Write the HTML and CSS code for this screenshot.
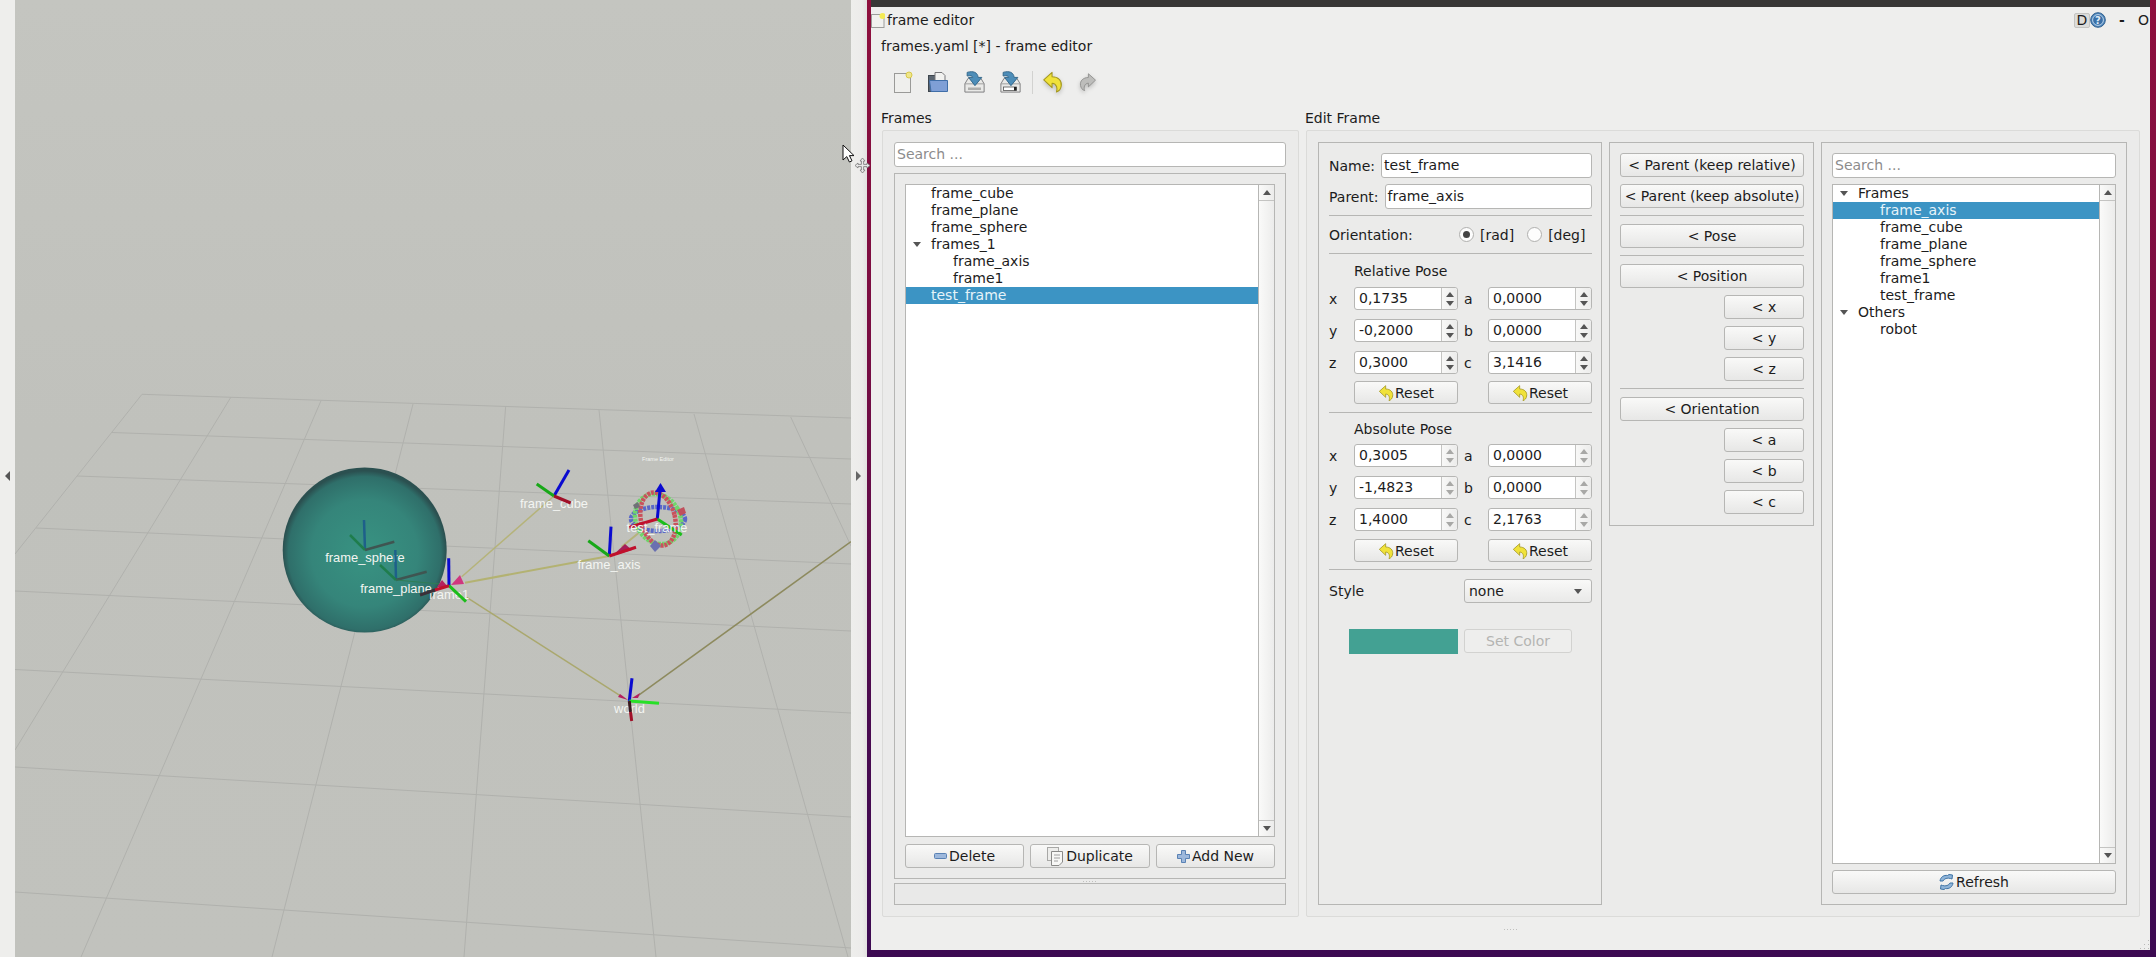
FILE: index.html
```html
<!DOCTYPE html>
<html lang="en">
<head>
<meta charset="utf-8">
<title>frame editor</title>
<link rel="stylesheet" href="styles.css">
</head>
<body>
<svg class="sprite" width="0" height="0" aria-hidden="true">
  <defs>
    <symbol id="i-undo" viewBox="0 0 24 24">
      <path d="M2 9.5 L11.5 1 V6 C18.5 6 23 10.5 22 16.5 C21.5 20 19.5 22.5 16.5 23.5 C18 19.5 17 14 11.5 13.5 V18.5 Z" fill="#f0e23a" stroke="#a3971f" stroke-width="1.2" stroke-linejoin="round"/>
    </symbol>
    <symbol id="i-redo" viewBox="0 0 24 24">
      <path d="M22 9.5 L12.5 1 V6 C5.5 6 1 10.5 2 16.5 C2.5 20 4.5 22.5 7.5 23.5 C6 19.5 7 14 12.5 13.5 V18.5 Z" fill="#bdbdbb" stroke="#8f8f8d" stroke-width="1.2" stroke-linejoin="round"/>
    </symbol>
    <symbol id="i-save" viewBox="0 0 24 24">
      <path d="M1.5 14 L5 8 H19 L22.5 14 V23 H1.5 Z" fill="#e9e9e7" stroke="#77777a" stroke-width="1"/>
      <path d="M1.5 14 H22.5" stroke="#9a9a9a" stroke-width="1"/>
      <path d="M4 1.5 C10.5 -0.5 15.5 1.5 16 7 H20 L12.5 16 L5.5 7 H10 C10 5.5 7.5 4.5 4 5.5 Z" fill="#4d8db8" stroke="#2f6488" stroke-width="1" stroke-linejoin="round"/>
    </symbol>
  </defs>
</svg>
<div class="screen">
  <div class="handle handle-left"><span class="tri-left"></span></div>
  <div class="viewport">
    <svg class="scene" viewBox="15 0 836 957" width="836" height="957">
      <defs>
        <radialGradient id="ball" cx="50%" cy="52%" r="50%">
          <stop offset="0" stop-color="#389382"/>
          <stop offset="0.65" stop-color="#35857a"/>
          <stop offset="0.93" stop-color="#2f6f6a"/>
          <stop offset="1" stop-color="#2b5050"/>
        </radialGradient>
      </defs>
      <g class="grid">
        <path d="M142 394.3L851 418M112 432.5L851 459M77 476L851 504M36 528L851 564M15 591L851 631M15 669.5L851 713M15 767L851 817M15 892L851 948"/>
        <path d="M142 394.3L15 554M231 397L15 750M321 400.7L81 957M413 404L272 957M505.7 406L464 957M599 410L656 957M694 414L848 957M790.7 417L851 546"/>
      </g>
      <ellipse cx="364.7" cy="550" rx="82" ry="82.5" fill="url(#ball)"/>
      <g class="axis-dim">
        <path d="M365 550L364 520" stroke="#1e608a"/>
        <path d="M365 550L350 535" stroke="#1f7d4d"/>
        <path d="M365 550L394.3 541.7" stroke="#3f5551"/>
      </g>
      <text class="label" x="365" y="562" text-anchor="middle">frame_sphere</text>
      <g class="axis-dim">
        <path d="M396 580L395.3 550" stroke="#1e608a"/>
        <path d="M396 580L380 565" stroke="#1f7d4d"/>
        <path d="M396 580L426.7 571.7" stroke="#3f5551"/>
      </g>
      <g class="links">
        <path d="M396 580L440 584" stroke="#2f7d56" stroke-width="1"/>
        <path d="M554 496L461.7 576.7" stroke="#b5b37a" stroke-width="1.5"/>
        <path d="M609.3 556L465 582.7" stroke="#b3b272" stroke-width="2"/>
        <path d="M466.7 597.3L621.7 696.7" stroke="#aaa86e" stroke-width="1.5"/>
        <path d="M636.7 696.7L851 541.5" stroke="#8d8a5e" stroke-width="1.5"/>
        <path d="M621.7 546.7L638.3 533.3" stroke="#b5b37a" stroke-width="2"/>
      </g>
      <path d="M451 585L460 575L464 584Z" fill="#d0367f"/>
      <path d="M437 587L442 580L448 587Z" fill="#b5205f"/>
      <path d="M612 556L625 544L632 550Z" fill="#a51f58"/>
      <path d="M618 697L628 700L620 694Z" fill="#b5205f"/>
      <path d="M632 698L640 693L638 698Z" fill="#b5205f"/>
      <text class="label" x="396" y="593" text-anchor="middle">frame_plane</text>
      <text class="label" x="449" y="599" text-anchor="middle">frame1</text>
      <g class="axis">
        <path d="M449 585.7L448.7 558.3" stroke="#0a0ad0"/>
        <path d="M449 585.7L466 601.7" stroke="#1bbd1b"/>
        <path d="M449 585.7L435 590" stroke="#c0102c"/>
        <path d="M435 590L420 595" stroke="#3a3038"/>
      </g>
      <text class="label" x="554" y="508" text-anchor="middle">frame_cube</text>
      <g class="axis">
        <path d="M554 496L569 470" stroke="#0a0ad0"/>
        <path d="M554 496L536.7 484" stroke="#18a818"/>
        <path d="M554 496L570.7 503" stroke="#a01028"/>
      </g>
      <g class="axis">
        <path d="M609.3 556L611 526.7" stroke="#0a0ad0"/>
        <path d="M609.3 556L588.3 540.7" stroke="#18a818"/>
        <path d="M609.3 556L636 547.3" stroke="#c0102c"/>
      </g>
      <text class="label" x="609" y="568.5" text-anchor="middle">frame_axis</text>
      <g class="rings">
        <ellipse cx="658" cy="519" rx="27" ry="12" stroke="#5a68c8"/>
        <ellipse cx="658" cy="519" rx="22" ry="26" stroke="#6fd66a" transform="rotate(-30 658 519)"/>
        <ellipse cx="658" cy="519" rx="17" ry="27" stroke="#c9525c" transform="rotate(-14 658 519)"/>
      </g>
      <path d="M650 546L655 540L661 546L655 552Z" fill="#6a70b0"/>
      <path d="M677 510L684 507L686 513L680 516Z" fill="#c0505c"/>
      <path d="M633 505L638 502L640 507L635 509Z" fill="#707078"/>
      <g class="axis">
        <path d="M657.3 519L660 490" stroke="#0a0ad0"/>
        <path d="M657.3 519L681.7 535" stroke="#1bbd1b"/>
        <path d="M657.3 519L629.3 527.3" stroke="#c0102c"/>
      </g>
      <path d="M655 492L660.5 483L666 492Z" fill="#0a0ad0"/>
      <text class="label" x="657" y="532" text-anchor="middle">test_frame</text>
      <text class="label-tiny" x="658" y="461" text-anchor="middle">Frame Editor</text>
      <text class="label" x="629.5" y="713" text-anchor="middle">world</text>
      <g class="axis">
        <path d="M629.3 701L632 678.3" stroke="#0a0ad0"/>
        <path d="M629.3 701L659 703.3" stroke="#28e028"/>
        <path d="M629.3 701L630.5 712" stroke="#3a1a20"/>
        <path d="M630.5 712L631.7 721" stroke="#a01028"/>
      </g>
    </svg>
  </div>
  <div class="handle handle-right"><span class="tri-right"></span></div>
  <div class="desktop">
    <div class="window">
      <div class="wm-bar"></div>
      <div class="titlebar">
        <span class="doc-icon">
          <svg width="14" height="15" viewBox="0 0 14 15"><rect x="0.5" y="1.5" width="12.5" height="13" fill="#f1f1ef" stroke="#9c9c9a"/><circle cx="11.5" cy="3" r="3" fill="#f3ea55"/></svg>
        </span>
        <span class="title-text">frame editor</span>
        <span class="title-tools">
          <span class="dock-d">D</span>
          <svg class="help" width="16" height="16" viewBox="0 0 16 16"><circle cx="8" cy="8" r="7.3" fill="#4f86bb" stroke="#2f5f8f"/><circle cx="8" cy="8" r="5.4" fill="#3a70a8" stroke="#bcd4ea"/><text x="8" y="11.5" text-anchor="middle" class="help-q">?</text></svg>
          <span class="wm-btn wm-min">-</span>
          <span class="wm-btn wm-o">O</span>
        </span>
      </div>
      <div class="apptitle">frames.yaml [*] - frame editor</div>
      <div class="toolbar">
        <span class="tool">
          <svg width="22" height="22" viewBox="0 0 22 22"><rect x="3.5" y="2.5" width="16" height="19" fill="#efefed" stroke="#9a9a98"/><circle cx="18" cy="4" r="3" fill="#efe68a" stroke="#d8c94a"/></svg>
        </span>
        <span class="tool">
          <svg width="22" height="22" viewBox="0 0 22 22"><rect x="1.5" y="4.5" width="14" height="16" fill="#5c6670" stroke="#3e464e"/><path d="M8 1.5H15L18 4.5V11H8Z" fill="#f2f2f0" stroke="#77777a"/><path d="M2.5 9.5H20.5V20.5H4Z" fill="#7f9fd6" stroke="#3f6ea8"/></svg>
        </span>
        <span class="tool">
          <svg width="23" height="22" viewBox="0 0 23 22"><use href="#i-save" width="23" height="22"/><rect x="5" y="16.5" width="13" height="2.5" fill="#aeaeac"/></svg>
        </span>
        <span class="tool">
          <svg width="23" height="22" viewBox="0 0 23 22"><use href="#i-save" width="23" height="22"/><rect x="4.5" y="16" width="13" height="3.5" fill="#fff" stroke="#555" stroke-width="0.8"/><rect x="15" y="16" width="2.5" height="3.5" fill="#222"/></svg>
        </span>
        <span class="tool-sep"></span>
        <span class="tool tool-shadow"><svg width="21" height="22"><use href="#i-undo"/></svg></span>
        <span class="tool tool-shadow"><svg width="18" height="22"><use href="#i-redo"/></svg></span>
      </div>
      <div class="main">
        <section class="col col-frames">
          <div class="col-label">Frames</div>
          <div class="box box-frames">
            <div class="input placeholder">Search ...</div>
            <div class="frames-inner">
              <div class="list list-frames">
                <div class="rows">
                  <div class="row top">frame_cube</div>
                  <div class="row top">frame_plane</div>
                  <div class="row top">frame_sphere</div>
                  <div class="row parent"><span class="twist"></span>frames_1</div>
                  <div class="row child">frame_axis</div>
                  <div class="row child">frame1</div>
                  <div class="row top selected">test_frame</div>
                </div>
                <div class="scrollbar">
                  <span class="sb-btn sb-up"><span class="tri-up"></span></span>
                  <span class="sb-track"></span>
                  <span class="sb-btn sb-down"><span class="tri-down"></span></span>
                </div>
              </div>
              <div class="btn-row">
                <button class="btn"><svg width="13" height="6" viewBox="0 0 13 6"><rect x="0.5" y="0.5" width="12" height="5" rx="1" fill="#9db8dc" stroke="#5a82b4"/></svg>Delete</button>
                <button class="btn"><svg width="17" height="19" viewBox="0 0 17 19"><rect x="0.5" y="0.5" width="11" height="13" fill="#ededeb" stroke="#a8a8a6"/><path d="M4.5 4.5H15.5V15L12 18.5H4.5Z" fill="#f7f7f5" stroke="#8a8a88"/><path d="M7 8H13M7 11H13M7 14H11" stroke="#a0a0a0"/></svg>Duplicate</button>
                <button class="btn"><svg width="13" height="13" viewBox="0 0 13 13"><path d="M4.5 .5H8.5V4.5H12.5V8.5H8.5V12.5H4.5V8.5H.5V4.5H4.5Z" fill="#9db8dc" stroke="#5a82b4"/></svg>Add New</button>
              </div>
            </div>
            <div class="split"><span class="dots"></span></div>
            <div class="status"></div>
          </div>
        </section>
        <section class="col col-edit">
          <div class="col-label">Edit Frame</div>
          <div class="box box-edit">
            <div class="panel panel-form">
              <div class="field"><label class="field-label">Name:</label><div class="input">test_frame</div></div>
              <div class="field field-2"><label class="field-label">Parent:</label><div class="input">frame_axis</div></div>
              <div class="sep sep-a"></div>
              <div class="orient">
                <span class="orient-label">Orientation:</span>
                <span class="radio on"></span><span class="radio-text">[rad]</span>
                <span class="radio"></span><span class="radio-text">[deg]</span>
              </div>
              <div class="sep"></div>
              <div class="pose-title pose-title-1">Relative Pose</div>
              <div class="pose">
                <span class="axis-l">x</span><div class="spin"><span class="spin-v">0,1735</span><span class="stepper"><span class="tri-up"></span><span class="tri-down"></span></span></div>
                <span class="axis-r">a</span><div class="spin"><span class="spin-v">0,0000</span><span class="stepper"><span class="tri-up"></span><span class="tri-down"></span></span></div>
                <span class="axis-l">y</span><div class="spin"><span class="spin-v">-0,2000</span><span class="stepper"><span class="tri-up"></span><span class="tri-down"></span></span></div>
                <span class="axis-r">b</span><div class="spin"><span class="spin-v">0,0000</span><span class="stepper"><span class="tri-up"></span><span class="tri-down"></span></span></div>
                <span class="axis-l">z</span><div class="spin"><span class="spin-v">0,3000</span><span class="stepper"><span class="tri-up"></span><span class="tri-down"></span></span></div>
                <span class="axis-r">c</span><div class="spin"><span class="spin-v">3,1416</span><span class="stepper"><span class="tri-up"></span><span class="tri-down"></span></span></div>
                <button class="btn reset reset-l"><svg width="16" height="16"><use href="#i-undo"/></svg>Reset</button>
                <button class="btn reset reset-r"><svg width="16" height="16"><use href="#i-undo"/></svg>Reset</button>
              </div>
              <div class="sep sep-b"></div>
              <div class="pose-title pose-title-2">Absolute Pose</div>
              <div class="pose pose-abs">
                <span class="axis-l">x</span><div class="spin"><span class="spin-v">0,3005</span><span class="stepper"><span class="tri-up"></span><span class="tri-down"></span></span></div>
                <span class="axis-r">a</span><div class="spin"><span class="spin-v">0,0000</span><span class="stepper"><span class="tri-up"></span><span class="tri-down"></span></span></div>
                <span class="axis-l">y</span><div class="spin"><span class="spin-v">-1,4823</span><span class="stepper"><span class="tri-up"></span><span class="tri-down"></span></span></div>
                <span class="axis-r">b</span><div class="spin"><span class="spin-v">0,0000</span><span class="stepper"><span class="tri-up"></span><span class="tri-down"></span></span></div>
                <span class="axis-l">z</span><div class="spin"><span class="spin-v">1,4000</span><span class="stepper"><span class="tri-up"></span><span class="tri-down"></span></span></div>
                <span class="axis-r">c</span><div class="spin"><span class="spin-v">2,1763</span><span class="stepper"><span class="tri-up"></span><span class="tri-down"></span></span></div>
                <button class="btn reset reset-l"><svg width="16" height="16"><use href="#i-undo"/></svg>Reset</button>
                <button class="btn reset reset-r"><svg width="16" height="16"><use href="#i-undo"/></svg>Reset</button>
              </div>
              <div class="sep sep-c"></div>
              <div class="style-row">
                <span>Style</span>
                <div class="combo"><span>none</span><span class="tri-down"></span></div>
              </div>
              <div class="color-row">
                <span class="swatch"></span>
                <button class="btn btn-disabled">Set Color</button>
              </div>
            </div>
            <div class="panel panel-actions">
              <button class="btn">&lt; Parent (keep relative)</button>
              <button class="btn btn-gap">&lt; Parent (keep absolute)</button>
              <div class="sep sep-act"></div>
              <button class="btn btn-after-sep">&lt; Pose</button>
              <div class="sep sep-act"></div>
              <button class="btn btn-after-sep">&lt; Position</button>
              <button class="btn btn-small">&lt; x</button>
              <button class="btn btn-small">&lt; y</button>
              <button class="btn btn-small">&lt; z</button>
              <div class="sep sep-act"></div>
              <button class="btn btn-after-sep">&lt; Orientation</button>
              <button class="btn btn-small">&lt; a</button>
              <button class="btn btn-small">&lt; b</button>
              <button class="btn btn-small">&lt; c</button>
            </div>
            <div class="panel panel-tree">
              <div class="input placeholder">Search ...</div>
              <div class="list list-tree">
                <div class="rows">
                  <div class="row parent"><span class="twist"></span>Frames</div>
                  <div class="row child selected">frame_axis</div>
                  <div class="row child">frame_cube</div>
                  <div class="row child">frame_plane</div>
                  <div class="row child">frame_sphere</div>
                  <div class="row child">frame1</div>
                  <div class="row child">test_frame</div>
                  <div class="row parent"><span class="twist"></span>Others</div>
                  <div class="row child">robot</div>
                </div>
                <div class="scrollbar">
                  <span class="sb-btn sb-up"><span class="tri-up"></span></span>
                  <span class="sb-track"></span>
                  <span class="sb-btn sb-down"><span class="tri-down"></span></span>
                </div>
              </div>
              <button class="btn btn-refresh"><svg width="15" height="16" viewBox="0 0 15 16"><path d="M1 7C1.5 3 5 0.8 8.5 1.5L10 .5L13.5 1L13 5L11.5 4.5C8.5 3.5 5 4.5 4 7Z" fill="#8fb4d8" stroke="#3f74a6" stroke-linejoin="round"/><path d="M14 9C13.5 13 10 15.2 6.5 14.5L5 15.5L1.5 15L2 11L3.5 11.5C6.5 12.5 10 11.5 11 9Z" fill="#8fb4d8" stroke="#3f74a6" stroke-linejoin="round"/></svg>Refresh</button>
            </div>
          </div>
        </section>
      </div>
      <div class="bottom-strip"><span class="dots"></span></div>
    </div>
  </div>
  <svg class="cursor-arrow" width="13" height="19" viewBox="0 0 13 19"><path d="M1 1V16L4.8 12.6L7.4 18L10 16.8L7.4 11.6H12Z" fill="#fff" stroke="#111" stroke-width="1"/></svg>
  <svg class="cursor-move" width="17" height="17" viewBox="0 0 17 17"><path d="M8.5 1L11 4H9.6V7.4H13V6L16 8.5L13 11V9.6H9.6V13H11L8.5 16L6 13H7.4V9.6H4V11L1 8.5L4 6V7.4H7.4V4H6Z" fill="#e8e8e8" stroke="#777" stroke-width="0.8"/></svg>
  <svg class="grip" width="11" height="11" viewBox="0 0 11 11"><g fill="#b9b9b7"><rect x="9" y="1" width="1" height="1"/><rect x="9" y="5" width="1" height="1"/><rect x="9" y="9" width="1" height="1"/><rect x="5" y="5" width="1" height="1"/><rect x="5" y="9" width="1" height="1"/><rect x="1" y="9" width="1" height="1"/></g></svg>
</div>
</body>
</html>
```

FILE: styles.css
```css
* { box-sizing: border-box; }
html, body { margin: 0; padding: 0; }
body { font-family: "DejaVu Sans", sans-serif; font-size: 14px; color: #1c1c1c; overflow: hidden; }
.sprite { position: absolute; }
.screen { position: relative; display: flex; width: 2156px; height: 957px; overflow: hidden; }

.handle { height: 957px; display: flex; align-items: center; background: #eeeeec; padding-bottom: 5px; }
.handle-left { width: 15px; padding-left: 5px; }
.handle-right { width: 16px; padding-left: 5px; background: linear-gradient(90deg, #eeeeec, #ecebea 70%, #e2e1e0); }
.tri-left { border-right: 5px solid #555; border-top: 5px solid transparent; border-bottom: 5px solid transparent; }
.tri-right { border-left: 5px solid #666; border-top: 5px solid transparent; border-bottom: 5px solid transparent; }

.viewport { width: 836px; height: 957px; background: linear-gradient(180deg, #c4c5c0, #c0c1bc 45%, #c1c2bd); }
.scene { display: block; }
.grid path { fill: none; stroke: #b0b1ad; stroke-width: 1; }
.axis path { fill: none; stroke-width: 3; }
.axis-dim path { fill: none; stroke-width: 2.5; }
.links path { fill: none; }
.rings ellipse { fill: none; stroke-width: 4.5; stroke-dasharray: 3 1; }
.label { font-family: "Liberation Sans", Arial, sans-serif; font-size: 12.9px; fill: #f3f5f2; }
.label-tiny { font-family: "Liberation Sans", Arial, sans-serif; font-size: 5.5px; fill: #f3f5f2; }

.desktop { flex: 1; height: 957px; padding: 0 6px 7px 4px; background: linear-gradient(180deg, #8e0f3d 0%, #7a0d42 35%, #4a0a50 75%, #3c0a52 100%); }
.window { height: 950px; display: flex; flex-direction: column; background: #eeeeed; }
.wm-bar { height: 7px; background: #383736; }
.titlebar { height: 26px; display: flex; align-items: center; }
.doc-icon { width: 15px; height: 15px; margin-right: 1px; display: flex; }
.title-text { flex: 1; }
.title-tools { display: flex; align-items: center; }
.dock-d { width: 16px; height: 15px; background: #dcdcda; border: 1px solid #c4c4c2; border-radius: 2px; font-size: 14px; line-height: 13px; text-align: center; }
.help { display: block; }
.help-q { font-family: "DejaVu Sans", sans-serif; font-size: 10px; font-weight: bold; fill: #dfeaf5; }
.wm-btn { font-weight: bold; text-align: center; }
.wm-min { width: 32px; }
.wm-o { width: 8px; margin-right: 4px; font-weight: normal; }
.apptitle { height: 26px; line-height: 26px; padding-left: 10px; }
.toolbar { height: 48px; padding: 12px 0 14px 13px; display: flex; align-items: center; }
.tool { width: 36px; height: 22px; display: flex; justify-content: center; }
.tool-sep { width: 1px; height: 23px; background: #d2d2d0; margin: 0 1px 0 4px; }
.tool-shadow svg { filter: drop-shadow(0 2px 2px rgba(0,0,0,.2)); }

.main { display: flex; padding-left: 11px; gap: 7px; }
.col-frames { width: 417px; }
.col-edit { width: 834px; }
.col-label { height: 23px; line-height: 23px; margin-left: -1px; }
.box { height: 787px; background: #ebebea; border: 1px solid #dbdbd9; border-radius: 2px; padding: 11px; }
.box-frames { display: flex; flex-direction: column; padding-right: 12px; }
.frames-inner { height: 706px; margin-top: 6px; padding: 10px; border: 1px solid #b6b6b4; background: #ebebea; }
.split { height: 4px; display: flex; justify-content: center; align-items: center; }
.status { height: 22px; border: 1px solid #b6b6b4; background: #e9e9e8; }
.input { flex: 1; height: 25px; line-height: 23px; padding-left: 2px; background: #fff; border: 1px solid #b6b6b4; border-radius: 3px; }
.placeholder { flex: none; color: #8c8c8c; }

.list { display: flex; background: #fff; border: 1px solid #b6b6b4; }
.list-frames { height: 653px; }
.rows { flex: 1; padding-top: 0; }
.row { height: 17px; line-height: 17px; }
.row.top { padding-left: 25px; }
.row.child { padding-left: 47px; }
.row.parent { padding-left: 7px; display: flex; align-items: center; }
.row.selected { background: #3c94c4; color: #e6f3f9; }
.twist { width: 0; height: 0; margin-right: 10px; border-top: 5px solid #555; border-left: 4px solid transparent; border-right: 4px solid transparent; }
.scrollbar { width: 16px; display: flex; flex-direction: column; border-left: 1px solid #b6b6b4; background: linear-gradient(90deg, #fafaf9, #ececeb); }
.sb-btn { height: 16px; display: flex; align-items: center; justify-content: center; }
.sb-up { border-bottom: 1px solid #c4c4c2; }
.sb-down { border-top: 1px solid #c4c4c2; }
.sb-track { flex: 1; }
.tri-up { display: block; width: 0; height: 0; border-bottom: 5px solid #555; border-left: 4px solid transparent; border-right: 4px solid transparent; }
.tri-down { display: block; width: 0; height: 0; border-top: 5px solid #555; border-left: 4px solid transparent; border-right: 4px solid transparent; }

.btn { height: 24px; padding: 0; display: flex; align-items: center; justify-content: center; gap: 2px; font: inherit; color: #1c1c1c; background: linear-gradient(180deg, #f9f9f8, #e7e7e6); border: 1px solid #b6b6b4; border-radius: 3px; white-space: nowrap; }
.btn-row { display: grid; grid-template-columns: 119px 120px 119px; gap: 6px; margin-top: 7px; }

.box-edit { display: grid; grid-template-columns: 284px 205px 306px; column-gap: 7px; align-items: start; }
.panel { border: 1px solid #b6b6b4; background: #ebebea; padding: 10px; display: flex; flex-direction: column; }
.panel-form { height: 763px; padding-right: 9px; }
.panel-tree { height: 763px; }
.panel-actions { height: 384px; padding-right: 9px; }

.field { display: flex; height: 25px; align-items: center; }
.field-2 { margin-top: 6px; }
.field-label { margin-right: 6px; }
.sep { height: 1px; background: #b6b6b4; }
.sep-a { margin-top: 6px; }
.orient { height: 37px; display: flex; align-items: center; }
.orient-label { width: 130px; }
.radio { width: 15px; height: 15px; border-radius: 50%; background: #fdfdfd; border: 1px solid #b0b0ae; margin-right: 6px; position: relative; display: flex; align-items: center; justify-content: center; }
.radio.on::after { content: ""; width: 7px; height: 7px; border-radius: 50%; background: #444; }
.radio-text { margin-right: 13px; }
.radio-text:last-child { margin-right: 0; }
.pose-title { padding-left: 25px; display: flex; align-items: center; }
.pose-title-1 { height: 33px; }
.pose-title-2 { height: 31px; }
.pose { display: grid; grid-template-columns: 25px 104px 30px 104px; grid-auto-rows: 23px; row-gap: 9px; align-items: center; }
.axis-r { padding-left: 6px; }
.spin { height: 23px; display: flex; background: #fff; border: 1px solid #b6b6b4; border-radius: 3px; }
.spin-v { flex: 1; padding-left: 4px; line-height: 21px; }
.stepper { width: 16px; display: flex; flex-direction: column; align-items: center; justify-content: center; gap: 4px; border-left: 1px solid #c4c4c2; background: linear-gradient(90deg, #f8f8f7, #ececeb); border-radius: 0 3px 3px 0; }
.pose-abs .tri-up { border-bottom-color: #a8a8a6; }
.pose-abs .tri-down { border-top-color: #a8a8a6; }
.reset { height: 23px; margin-top: -2px; gap: 1px; align-self: start; }
.pose-abs .reset { margin-top: -1px; }
.reset-l { grid-column: 2; }
.reset-r { grid-column: 4; }
.sep-b { margin-top: 6px; }
.sep-c { margin-top: 6px; }
.style-row { margin-top: 9px; display: flex; justify-content: space-between; align-items: center; }
.combo { width: 128px; height: 24px; display: flex; align-items: center; justify-content: space-between; padding: 0 9px 0 4px; background: linear-gradient(180deg, #f9f9f8, #e9e9e8); border: 1px solid #b6b6b4; border-radius: 3px; }
.color-row { margin-top: 26px; display: flex; gap: 6px; padding-left: 20px; align-items: flex-start; }
.swatch { width: 109px; height: 25px; background: #43a193; }
.btn-disabled { width: 108px; color: #b4b4b2; background: #eeeeed; border-color: #d2d2d0; }

.panel-actions .btn { flex: none; }
.btn-gap { margin-top: 7px; }
.sep-act { margin-top: 7px; }
.btn-after-sep { margin-top: 8px; }
.btn-small { width: 80px; align-self: flex-end; margin-top: 7px; }

.list-tree { height: 680px; margin-top: 6px; }
.btn-refresh { margin-top: 6px; }

.bottom-strip { flex: 1; display: flex; justify-content: center; padding-top: 12px; }
.dots { width: 14px; height: 1px; background: repeating-linear-gradient(90deg, #c0c0be 0 1px, transparent 1px 3px); }

.cursor-arrow { position: absolute; left: 842px; top: 144px; }
.cursor-move { position: absolute; left: 854px; top: 157px; }
.grip { position: absolute; left: 2139px; top: 939px; }
```
